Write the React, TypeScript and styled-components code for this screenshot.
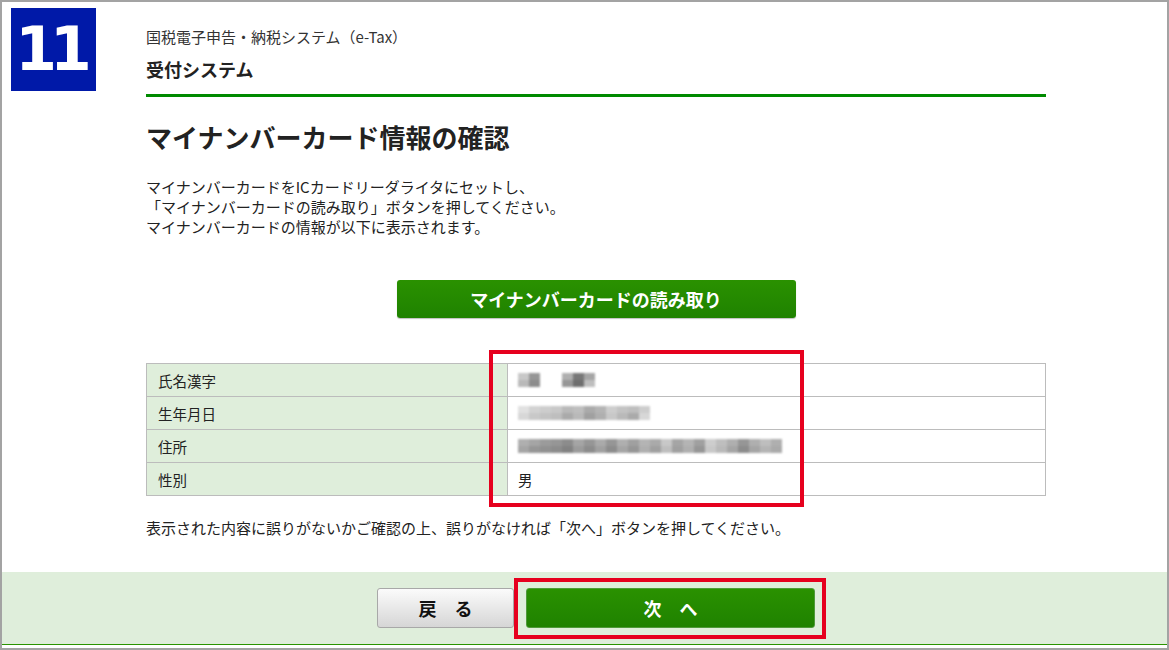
import React from 'react'
import styled, { createGlobalStyle } from 'styled-components'

const GlobalStyle = createGlobalStyle`
  html, body {
    margin: 0;
    padding: 0;
    background: #ffffff;
  }
  body {
    font-family: "Noto Sans CJK JP", "Noto Sans", sans-serif;
    color: #222222;
  }
`

const rows = [
  { label: '氏名漢字', value: 'name' },
  { label: '生年月日', value: 'birth' },
  { label: '住所', value: 'address' },
  { label: '性別', value: 'gender' },
]

// blurred (mosaic) cells per row, grey levels for top and bottom halves
const mosaics: { [key: string]: number[][] } = {
  name: [
    [200, 150, 0, 0, 175, 120, 165],
    [185, 140, 0, 0, 150, 110, 190],
  ],
  birth: [
    [225, 210, 205, 200, 185, 190, 170, 180, 205, 195, 190, 205],
    [215, 200, 195, 190, 170, 185, 160, 175, 200, 185, 170, 215],
  ],
  address: [
    [175, 165, 155, 150, 140, 165, 150, 170, 150, 175, 160, 180, 170, 200, 165, 180, 160, 205, 190, 175, 150, 175, 190, 175],
    [165, 150, 145, 140, 130, 155, 140, 160, 140, 165, 150, 175, 160, 190, 160, 175, 150, 200, 185, 165, 140, 165, 180, 170],
  ],
}

const App: React.FC = () => {
  return (
    <>
      <GlobalStyle />
      <Frame>
        <Header>
          <StepBadge>11</StepBadge>
          <HeaderText>
            <SystemName>国税電子申告・納税システム（e-Tax）</SystemName>
            <SubSystem>受付システム</SubSystem>
          </HeaderText>
        </Header>
        <Main>
          <GreenRule />
          <Title>マイナンバーカード情報の確認</Title>
          <Intro>
            マイナンバーカードをICカードリーダライタにセットし、
            <br />
            「マイナンバーカードの読み取り」ボタンを押してください。
            <br />
            マイナンバーカードの情報が以下に表示されます。
          </Intro>
          <ReadRow>
            <ReadButton>マイナンバーカードの読み取り</ReadButton>
          </ReadRow>
          <TableWrap>
            <InfoTable>
              <tbody>
                {rows.map((r) => (
                  <tr key={r.label}>
                    <LabelCell>{r.label}</LabelCell>
                    <ValueCell>
                      {r.value === 'gender' ? (
                        '男'
                      ) : (
                        <Mosaic>
                          {mosaics[r.value].map((line, li) => (
                            <MosaicLine key={li}>
                              {line.map((g, i) => (
                                <MosaicCell
                                  key={i}
                                  style={{ background: g === 0 ? 'transparent' : `rgb(${g},${g},${g})` }}
                                />
                              ))}
                            </MosaicLine>
                          ))}
                        </Mosaic>
                      )}
                    </ValueCell>
                  </tr>
                ))}
              </tbody>
            </InfoTable>
            <HighlightBox $top={-13} $left={343} $width={315} $height={157} />
          </TableWrap>
          <Notice>表示された内容に誤りがないかご確認の上、誤りがなければ「次へ」ボタンを押してください。</Notice>
        </Main>
        <Footer>
          <ButtonRow>
            <BackButton>戻　る</BackButton>
            <NextWrap>
              <NextButton>次　へ</NextButton>
              <HighlightBox $top={-10} $left={-12} $width={312} $height={61} />
            </NextWrap>
          </ButtonRow>
        </Footer>
      </Frame>
    </>
  )
}

export default App

const Frame = styled.div`
  box-sizing: border-box;
  width: 1169px;
  height: 650px;
  border: 2px solid #a3a3a3;
  display: flex;
  flex-direction: column;
  background: #ffffff;
  overflow: hidden;
`

const Header = styled.div`
  display: flex;
  align-items: flex-start;
  padding: 6px 0 0 9px;
`

const StepBadge = styled.div`
  width: 85px;
  height: 83px;
  background: #0019a8;
  color: #ffffff;
  font-family: "DejaVu Sans", sans-serif;
  font-weight: bold;
  font-size: 60px;
  line-height: 83px;
  text-align: center;
  letter-spacing: -7px;
  text-indent: -7px;
`

const HeaderText = styled.div`
  margin-left: 50px;
  padding-top: 19px;
  display: flex;
  flex-direction: column;
`

const SystemName = styled.div`
  font-size: 15px;
  line-height: 20px;
  color: #333333;
`

const SubSystem = styled.div`
  margin-top: 10px;
  font-size: 18px;
  line-height: 24px;
  font-weight: bold;
  color: #222222;
`

const Main = styled.div`
  margin-left: 144px;
  width: 900px;
  flex: 1;
`

const GreenRule = styled.div`
  height: 3px;
  background: #008a00;
  margin-top: 3px;
`

const Title = styled.h1`
  margin: 23px 0 0;
  font-size: 26px;
  line-height: 34px;
  font-weight: bold;
  color: #222222;
`

const Intro = styled.p`
  margin: 23px 0 0;
  font-size: 15px;
  line-height: 20px;
  color: #222222;
`

const ReadRow = styled.div`
  display: flex;
  justify-content: center;
  margin-top: 43px;
`

const ReadButton = styled.div`
  width: 399px;
  height: 38px;
  border-radius: 3px;
  background: linear-gradient(#2a9100, #1f8200);
  color: #ffffff;
  font-size: 18px;
  font-weight: bold;
  display: flex;
  align-items: center;
  justify-content: center;
  box-shadow: 0 1px 1px rgba(0, 0, 0, 0.25);
`

const TableWrap = styled.div`
  position: relative;
  margin-top: 45px;
`

const InfoTable = styled.table`
  width: 900px;
  border-collapse: collapse;
  font-size: 14.5px;
`

const LabelCell = styled.td`
  width: 338px;
  height: 32px;
  padding: 0 11px;
  background: #dfeedb;
  border: 1px solid #bcbcbc;
  color: #222222;
`

const ValueCell = styled.td`
  height: 32px;
  padding: 0 10px;
  border: 1px solid #bcbcbc;
  color: #222222;
`

const Mosaic = styled.div`
  display: flex;
  flex-direction: column;
  filter: blur(0.8px);
`

const MosaicLine = styled.div`
  display: flex;
`

const MosaicCell = styled.span`
  width: 11px;
  height: 7px;
`

const HighlightBox = styled.div<{ $top: number; $left: number; $width: number; $height: number }>`
  position: absolute;
  top: ${(p) => p.$top}px;
  left: ${(p) => p.$left}px;
  width: ${(p) => p.$width}px;
  height: ${(p) => p.$height}px;
  box-sizing: border-box;
  border: 4px solid #e6001e;
  pointer-events: none;
`

const Notice = styled.p`
  margin: 22px 0 0;
  font-size: 15px;
  line-height: 20px;
  color: #222222;
`

const Footer = styled.div`
  height: 72px;
  margin-bottom: 3px;
  background: #dfeedb;
  border-bottom: 1px solid #2a9400;
  display: flex;
  align-items: center;
`

const ButtonRow = styled.div`
  margin-left: 375px;
  display: flex;
  gap: 12px;
`

const BaseButton = styled.div`
  height: 40px;
  box-sizing: border-box;
  border-radius: 3px;
  font-size: 18px;
  font-weight: bold;
  display: flex;
  align-items: center;
  justify-content: center;
`

const BackButton = styled(BaseButton)`
  width: 137px;
  border: 1px solid #a8a8a8;
  background: linear-gradient(#fbfbfb, #d6d6d6);
  color: #111111;
`

const NextWrap = styled.div`
  position: relative;
`

const NextButton = styled(BaseButton)`
  width: 289px;
  border: 1px solid #4f9a3a;
  background: linear-gradient(#2a9100, #1f8200);
  color: #ffffff;
`
